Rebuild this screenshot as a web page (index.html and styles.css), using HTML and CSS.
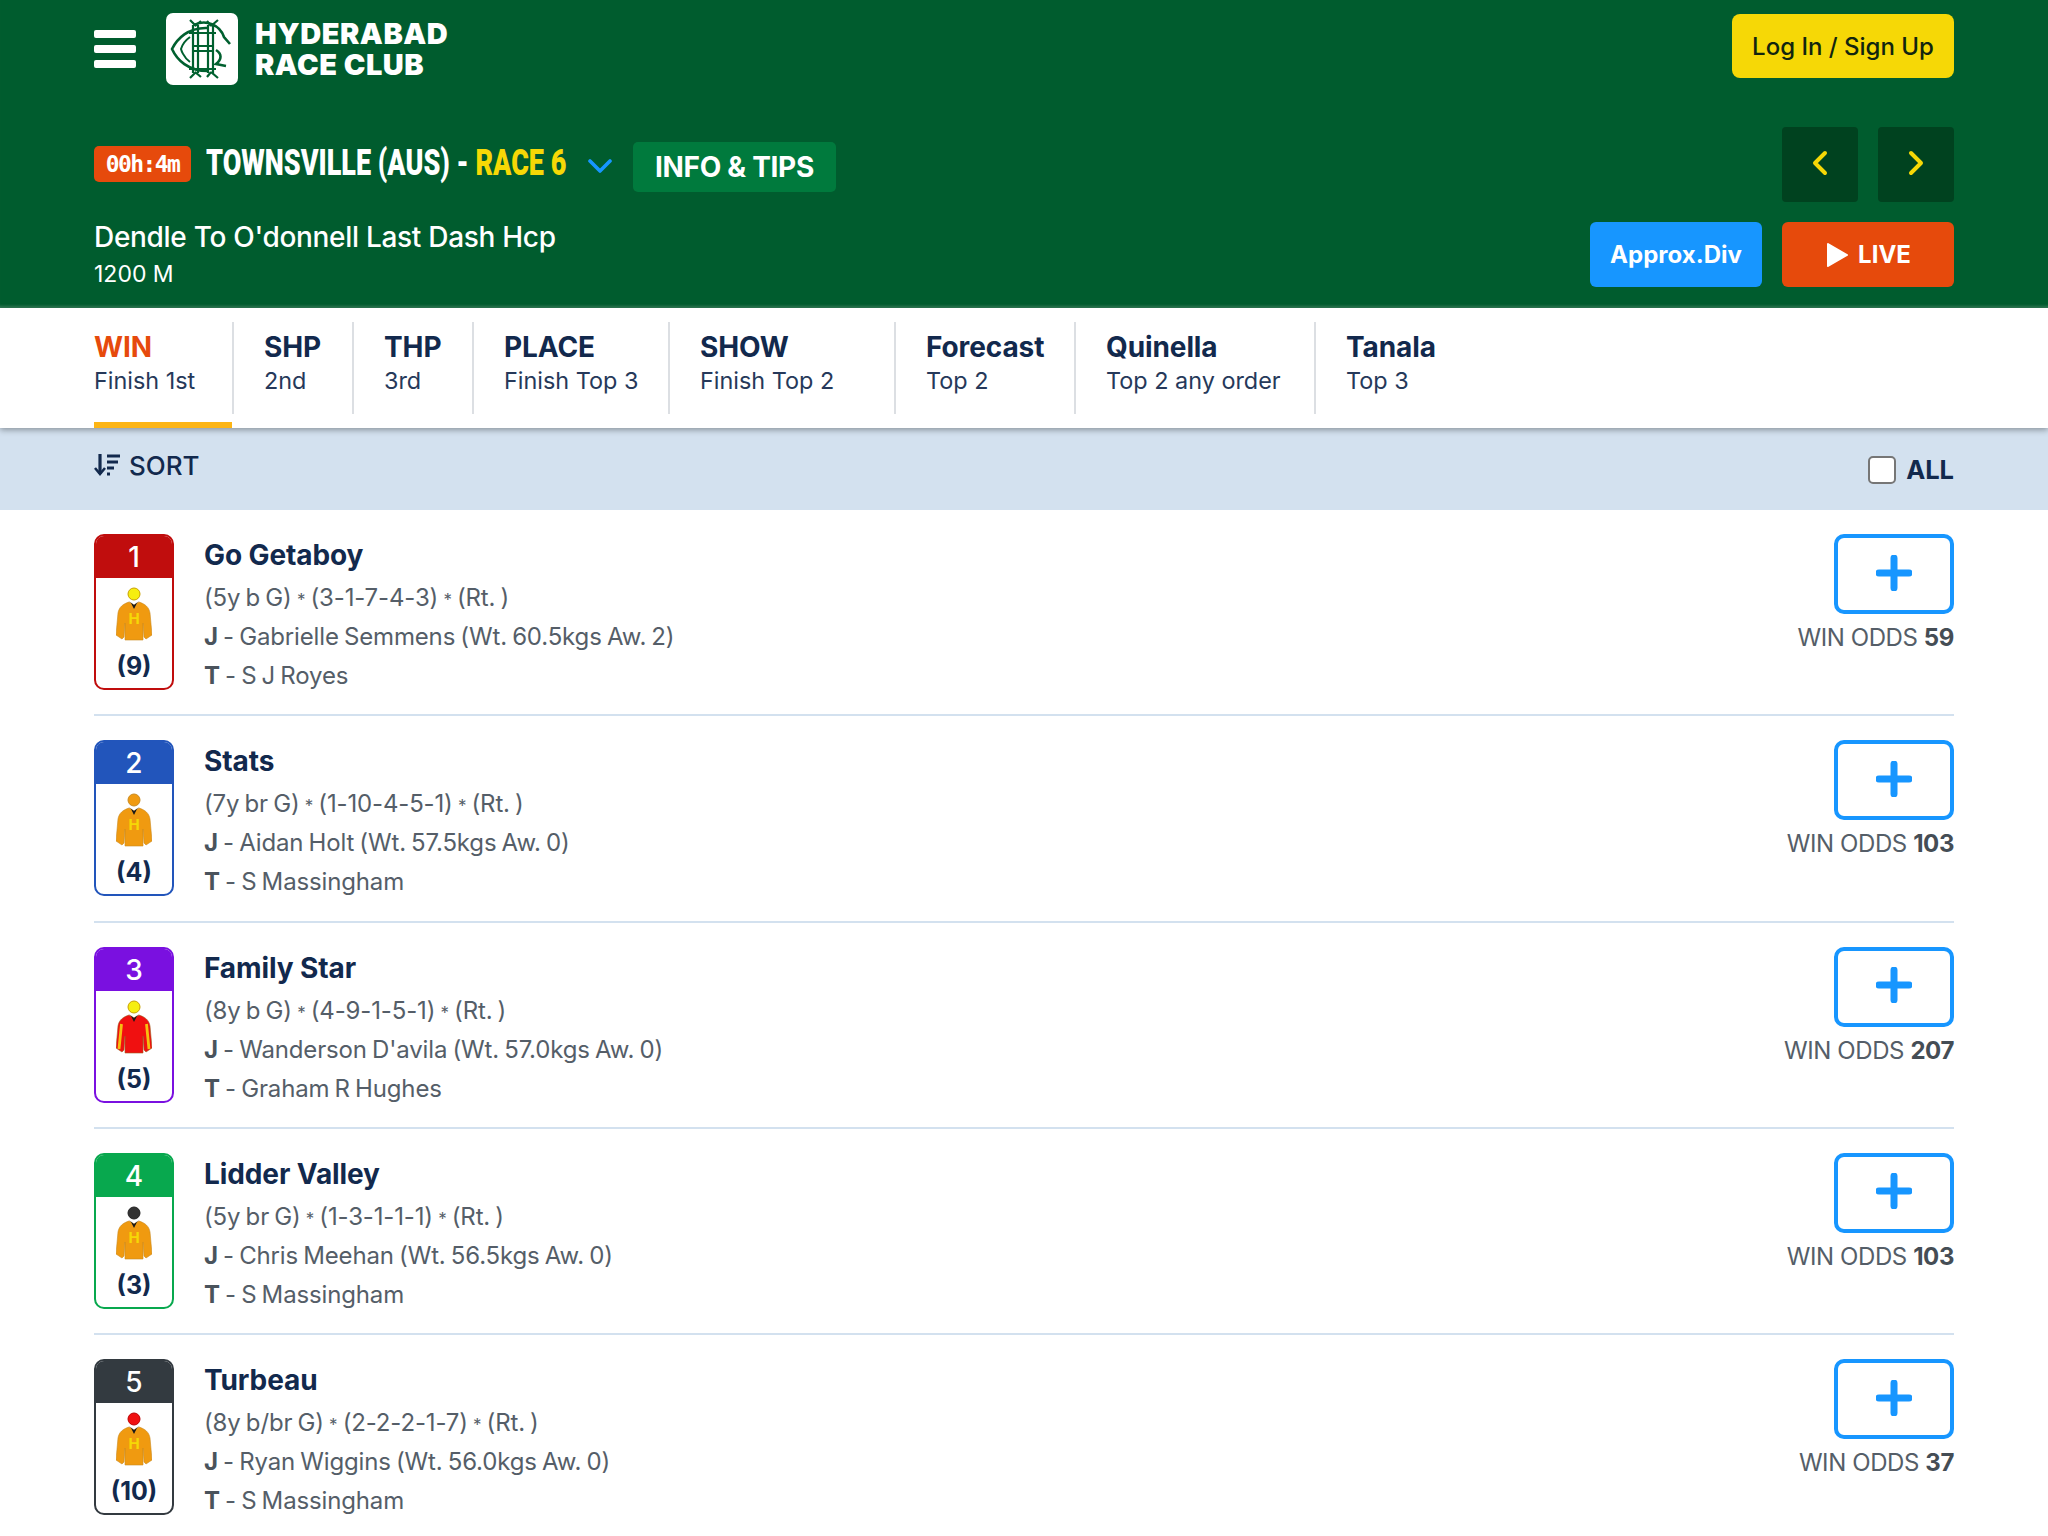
FILE: index.html
```html
<!DOCTYPE html>
<html lang="en">
<head>
<meta charset="utf-8">
<title>Hyderabad Race Club</title>
<link rel="stylesheet" href="styles.css">
</head>
<body>
<svg class="defs" width="0" height="0" aria-hidden="true">
  <symbol id="shirt" viewBox="0 0 36 40">
    <path d="M13 1 L18 4 L23 1 C29 3 33 6 34 12 L36 34 L30 38 L28 36 L27 22 L27 39 L9 39 L9 22 L8 36 L6 38 L0 34 L2 12 C3 6 7 3 13 1 Z" fill="#f09a10" stroke="#c98a20" stroke-width=".6"/>
    <path d="M13 0 L18 4 L23 0 L21 2 L18 8 L15 2 Z" fill="#1a1a1a"/>
  </symbol>
</svg>

<header class="header">
  <div class="topbar">
    <div class="brand">
      <div class="burger"><span></span><span></span><span></span></div>
      <div class="logo">
        <svg viewBox="0 0 72 72" width="72" height="72">
          <g fill="none" stroke="#00602f">
            <path d="M42 15 C22 14 11 26 6 36 C11 47 22 58 42 58" stroke-width="2.6"/>
            <path d="M24 24 C17 29 15 36 15 36 C15 36 17 44 24 49" stroke-width="2"/>
            <path d="M28 12 C40 6 54 12 58 24 L64 31" stroke-width="2.6"/>
            <path d="M50 37 C56 41 56 46 50 51 L60 53" stroke-width="2.6"/>
            <path d="M27 12 V60 M32 12 V60 M42 12 V60 M47 12 V60" stroke-width="2.2"/>
            <path d="M27 33 H47 M27 38 H47" stroke-width="2"/>
            <path d="M23 20 H50 M23 56 H50" stroke-width="2"/>
            <path d="M24 7 L30 13 M35 8 L29 13 M41 8 L45 13 M52 7 L45 13 M24 65 L30 59 M35 64 L29 59 M41 64 L45 59 M52 65 L45 59" stroke-width="2.2"/>
          </g>
        </svg>
      </div>
      <div class="logo-text">HYDERABAD<br>RACE CLUB</div>
    </div>
    <a class="login">Log In / Sign Up</a>
  </div>
  <div class="racebar">
    <div class="race-left">
      <div class="race-title">
        <span class="timer">00h:4m</span>
        <span class="venue-wrap"><span class="venue">TOWNSVILLE (AUS) - <em>RACE 6</em></span></span>
        <svg class="chevron" viewBox="0 0 24 14" width="24" height="14"><path d="M2 2 L12 12 L22 2" fill="none" stroke="#1796ff" stroke-width="3.6" stroke-linecap="round" stroke-linejoin="round"/></svg>
        <a class="info">INFO &amp; TIPS</a>
      </div>
      <div class="race-name">Dendle To O'donnell Last Dash Hcp</div>
      <div class="race-dist">1200 M</div>
    </div>
    <div class="race-right">
      <div class="arrows">
        <a class="arrow"><svg viewBox="0 0 16 26" width="16" height="26"><path d="M13 3 L3 13 L13 23" fill="none" stroke="#f6d806" stroke-width="4" stroke-linecap="round" stroke-linejoin="round"/></svg></a>
        <a class="arrow"><svg viewBox="0 0 16 26" width="16" height="26"><path d="M3 3 L13 13 L3 23" fill="none" stroke="#f6d806" stroke-width="4" stroke-linecap="round" stroke-linejoin="round"/></svg></a>
      </div>
      <div class="actions">
        <a class="btn btn-blue">Approx.Div</a>
        <a class="btn btn-orange"><svg viewBox="0 0 24 26" width="24" height="26"><path d="M3 2 L22 13 L3 24 Z" fill="#fff" stroke="#fff" stroke-width="2" stroke-linejoin="round"/></svg>LIVE</a>
      </div>
    </div>
  </div>
</header>

<nav class="tabs">
  <div class="tab tab-active"><b>WIN</b><span>Finish 1st</span></div>
  <div class="tab"><b>SHP</b><span>2nd</span></div>
  <div class="tab"><b>THP</b><span>3rd</span></div>
  <div class="tab"><b>PLACE</b><span>Finish Top 3</span></div>
  <div class="tab"><b>SHOW</b><span>Finish Top 2</span></div>
  <div class="tab"><b>Forecast</b><span>Top 2</span></div>
  <div class="tab"><b>Quinella</b><span>Top 2 any order</span></div>
  <div class="tab tab-last"><b>Tanala</b><span>Top 3</span></div>
</nav>

<div class="sortbar">
  <div class="sort">
    <svg viewBox="0 0 26 24" width="26" height="24"><g fill="none" stroke="#12294d" stroke-width="3.2"><path d="M6 1 V21"/><path d="M1 15 L6 21 L11 15" stroke-width="2.6"/><path d="M13 3 H26 M13 9 H24 M13 15 H20 M13 21 H16"/></g></svg>
    <span>SORT</span>
  </div>
  <label class="all"><span class="check"></span>ALL</label>
</div>

<main class="list">
  <article class="row c-red">
    <div class="card"><div class="num">1</div>
      <svg class="cap" viewBox="0 0 14 14"><circle cx="7" cy="7" r="6" fill="#f6ee10" stroke="#c9a000"/></svg>
      <svg class="shirt" viewBox="0 0 36 40"><use href="#shirt" width="36" height="40"/><text x="18" y="23" text-anchor="middle" class="shirt-h">H</text></svg>
      <div class="draw">(9)</div></div>
    <div class="info-col">
      <h2>Go Getaboy</h2>
      <p>(5y b G) <i>*</i> (3-1-7-4-3) <i>*</i> (Rt. )</p>
      <p><b>J</b> - Gabrielle Semmens (Wt. 60.5kgs Aw. 2)</p>
      <p><b>T</b> - S J Royes</p>
    </div>
    <div class="odds-col">
      <a class="add"><svg viewBox="0 0 36 36" width="36" height="36"><path d="M18 3 V33 M3 18 H33" stroke="#1796ff" stroke-width="7" stroke-linecap="round"/></svg></a>
      <div class="odds">WIN ODDS <b>59</b></div>
    </div>
  </article>

  <article class="row c-blue">
    <div class="card"><div class="num">2</div>
      <svg class="cap" viewBox="0 0 14 14"><circle cx="7" cy="7" r="6" fill="#f09a10" stroke="#c98a20"/></svg>
      <svg class="shirt" viewBox="0 0 36 40"><use href="#shirt" width="36" height="40"/><text x="18" y="23" text-anchor="middle" class="shirt-h">H</text></svg>
      <div class="draw">(4)</div></div>
    <div class="info-col">
      <h2>Stats</h2>
      <p>(7y br G) <i>*</i> (1-10-4-5-1) <i>*</i> (Rt. )</p>
      <p><b>J</b> - Aidan Holt (Wt. 57.5kgs Aw. 0)</p>
      <p><b>T</b> - S Massingham</p>
    </div>
    <div class="odds-col">
      <a class="add"><svg viewBox="0 0 36 36" width="36" height="36"><path d="M18 3 V33 M3 18 H33" stroke="#1796ff" stroke-width="7" stroke-linecap="round"/></svg></a>
      <div class="odds">WIN ODDS <b>103</b></div>
    </div>
  </article>

  <article class="row c-purple">
    <div class="card"><div class="num">3</div>
      <svg class="cap" viewBox="0 0 14 14"><circle cx="7" cy="7" r="6" fill="#f6ee10" stroke="#c9a000"/></svg>
      <svg class="shirt" viewBox="0 0 36 40">
        <path d="M13 1 L18 4 L23 1 C29 3 33 6 34 12 L36 34 L30 38 L28 36 L27 22 L27 39 L9 39 L9 22 L8 36 L6 38 L0 34 L2 12 C3 6 7 3 13 1 Z" fill="#f01010" stroke="#a06020" stroke-width=".6"/>
        <path d="M5.5 10 L3 35 M30.5 10 L33 35" stroke="#f6c010" stroke-width="2.8" fill="none"/>
        <path d="M13 0 L18 4 L23 0 L21 2 L18 8 L15 2 Z" fill="#1a1a1a"/>
      </svg>
      <div class="draw">(5)</div></div>
    <div class="info-col">
      <h2>Family Star</h2>
      <p>(8y b G) <i>*</i> (4-9-1-5-1) <i>*</i> (Rt. )</p>
      <p><b>J</b> - Wanderson D'avila (Wt. 57.0kgs Aw. 0)</p>
      <p><b>T</b> - Graham R Hughes</p>
    </div>
    <div class="odds-col">
      <a class="add"><svg viewBox="0 0 36 36" width="36" height="36"><path d="M18 3 V33 M3 18 H33" stroke="#1796ff" stroke-width="7" stroke-linecap="round"/></svg></a>
      <div class="odds">WIN ODDS <b>207</b></div>
    </div>
  </article>

  <article class="row c-green">
    <div class="card"><div class="num">4</div>
      <svg class="cap" viewBox="0 0 14 14"><circle cx="7" cy="7" r="6" fill="#333" stroke="#222"/></svg>
      <svg class="shirt" viewBox="0 0 36 40"><use href="#shirt" width="36" height="40"/><text x="18" y="23" text-anchor="middle" class="shirt-h">H</text></svg>
      <div class="draw">(3)</div></div>
    <div class="info-col">
      <h2>Lidder Valley</h2>
      <p>(5y br G) <i>*</i> (1-3-1-1-1) <i>*</i> (Rt. )</p>
      <p><b>J</b> - Chris Meehan (Wt. 56.5kgs Aw. 0)</p>
      <p><b>T</b> - S Massingham</p>
    </div>
    <div class="odds-col">
      <a class="add"><svg viewBox="0 0 36 36" width="36" height="36"><path d="M18 3 V33 M3 18 H33" stroke="#1796ff" stroke-width="7" stroke-linecap="round"/></svg></a>
      <div class="odds">WIN ODDS <b>103</b></div>
    </div>
  </article>

  <article class="row c-dark">
    <div class="card"><div class="num">5</div>
      <svg class="cap" viewBox="0 0 14 14"><circle cx="7" cy="7" r="6" fill="#f01010" stroke="#b00"/></svg>
      <svg class="shirt" viewBox="0 0 36 40"><use href="#shirt" width="36" height="40"/><text x="18" y="23" text-anchor="middle" class="shirt-h">H</text></svg>
      <div class="draw">(10)</div></div>
    <div class="info-col">
      <h2>Turbeau</h2>
      <p>(8y b/br G) <i>*</i> (2-2-2-1-7) <i>*</i> (Rt. )</p>
      <p><b>J</b> - Ryan Wiggins (Wt. 56.0kgs Aw. 0)</p>
      <p><b>T</b> - S Massingham</p>
    </div>
    <div class="odds-col">
      <a class="add"><svg viewBox="0 0 36 36" width="36" height="36"><path d="M18 3 V33 M3 18 H33" stroke="#1796ff" stroke-width="7" stroke-linecap="round"/></svg></a>
      <div class="odds">WIN ODDS <b>37</b></div>
    </div>
  </article>
</main>
</body>
</html>
```
FILE: styles.css
```css
* { box-sizing: border-box; }
html, body { margin: 0; height: 1536px; overflow: hidden; }
body { font-family: Inter, "Liberation Sans", sans-serif; color: #12294d; background: #fff; }
.defs { position: absolute; }
a { display: flex; align-items: center; justify-content: center; }

.header { background: #005c2e; height: 308px; padding: 13px 94px 0; color: #fff; box-shadow: inset 0 -4px 3px -2px rgba(255,255,255,.2); }
.topbar { display: flex; justify-content: space-between; align-items: flex-start; height: 114px; }
.brand { display: flex; align-items: center; height: 72px; }
.burger { display: flex; flex-direction: column; gap: 7px; width: 42px; margin-right: 30px; }
.burger span { display: block; height: 8px; background: #fff; border-radius: 2px; }
.logo { width: 72px; height: 72px; background: #fff; border-radius: 7px; margin-right: 17px; }
.logo svg { display: block; }
.logo-text { font-weight: 900; font-size: 29px; line-height: 31px; letter-spacing: .5px; }
.login { width: 222px; height: 64px; margin-top: 1px; background: #f6d806; color: #11250f; border-radius: 8px; font-size: 24px; font-weight: 500; }

.racebar { display: flex; justify-content: space-between; }
.race-title { display: flex; align-items: center; height: 50px; margin-top: 15px; }
.timer { width: 97px; height: 36px; margin-right: 15px; background: #e64a0c; border-radius: 5px; font-family: "DejaVu Sans Mono", monospace; font-size: 23px; font-weight: 700; letter-spacing: -1.6px; display: flex; align-items: center; justify-content: center; position: relative; top: -3px; }
.venue-wrap { display: block; width: 363px; margin-right: 19px; position: relative; top: -4px; }
.venue { display: inline-block; font-family: Roboto, sans-serif; font-size: 36px; font-weight: 900; white-space: nowrap; transform-origin: left center; transform: scaleX(.75); }
.venue em { font-style: normal; color: #f6d806; }
.chevron { margin-right: 21px; flex: none; position: relative; top: -1px; }
.info { width: 203px; height: 50px; background: #007a3d; border-radius: 5px; font-size: 28px; font-weight: 700; letter-spacing: -.3px; }
.race-name { font-size: 28px; font-weight: 500; line-height: 34px; margin-top: 28px; letter-spacing: -.3px; }
.race-dist { font-size: 23px; line-height: 30px; margin-top: 5px; }

.race-right { display: flex; flex-direction: column; align-items: flex-end; gap: 21px; }
.arrows, .actions { display: flex; gap: 20px; }
.arrow { width: 76px; height: 75px; padding-bottom: 3px; background: #00421f; border-radius: 4px; }
.actions { margin-top: -1px; }
.btn { height: 65px; border-radius: 6px; font-size: 24px; font-weight: 700; }
.btn-blue { width: 172px; background: #1796ff; }
.btn-orange { width: 172px; background: #e64a0c; gap: 9px; }

.tabs { display: grid; grid-template-columns: 140px 120px 120px 196px 226px 180px 240px auto; height: 120px; padding: 14px 94px 0; background: #fff; position: relative; box-shadow: 0 2px 6px rgba(0,0,0,.35); }
.tab { height: 92px; padding: 9px 0 0 30px; border-right: 2px solid #dcdfe3; position: relative; display: flex; flex-direction: column; }
.tab b { font-size: 28px; line-height: 33px; font-weight: 700; letter-spacing: -.1px; }
.tab span { font-size: 23.4px; line-height: 33px; color: #26395a; }
.tab-active { padding-left: 0; }
.tab-active b { color: #e64a0c; }
.tab-active::after { content: ""; position: absolute; left: 0; right: 0; bottom: -14px; height: 6px; background: #fdb515; }
.tab-last { border-right: 0; }

.sortbar { height: 82px; background: #d3e1ef; padding: 0 94px; display: flex; justify-content: space-between; }
.sort { display: flex; align-items: center; gap: 9px; height: 74px; font-size: 26px; font-weight: 500; }
.all { display: flex; align-items: center; gap: 10px; height: 83px; font-size: 25.5px; font-weight: 700; }
.check { width: 28px; height: 28px; background: #fff; border: 2px solid #767676; border-radius: 5px; }

.list { padding: 0 94px; }
.row { display: flex; justify-content: space-between; height: 206.25px; padding-top: 24px; border-bottom: 2px solid #d3e1ef; }
.row:last-child { border-bottom: 0; }
.card { --c: #c00d0d; width: 80px; height: 156px; border: 2px solid var(--c); border-radius: 10px; display: flex; flex-direction: column; align-items: center; flex: none; overflow: hidden; }
.c-blue .card { --c: #2255bb; }
.c-purple .card { --c: #7a10e0; }
.c-green .card { --c: #08a84e; }
.c-dark .card { --c: #333a40; }
.num { width: 100%; height: 42px; background: var(--c); color: #fff; text-align: center; font-size: 28px; font-weight: 500; line-height: 42px; flex: none; }
.cap { width: 14px; height: 14px; margin-top: 9px; flex: none; }
.shirt { width: 36px; height: 40px; flex: none; }
.shirt-h { font: 700 15px Inter, sans-serif; fill: #f6d806; }
.draw { font-size: 25px; font-weight: 700; line-height: 30px; margin-top: 10px; }
.info-col { flex: 1; margin-left: 30px; padding-top: 4px; }
.info-col h2 { margin: 0 0 8px; font-size: 28px; font-weight: 700; line-height: 34px; letter-spacing: -.1px; }
.info-col p { margin: 0 0 3px; font-size: 24px; line-height: 36px; color: #555e68; letter-spacing: -.15px; word-spacing: -1.4px; }
.info-col p i { font-style: normal; font-size: 17px; line-height: 0; }
.info-col p b { font-weight: 700; color: #4a535c; }
.odds-col { display: flex; flex-direction: column; align-items: flex-end; }
.add { width: 120px; height: 80px; padding-bottom: 3px; border: 4px solid #1796ff; border-radius: 10px; }
.odds { font-size: 24px; line-height: 30px; margin-top: 9px; color: #555e68; letter-spacing: -.4px; }
.odds b { font-weight: 700; color: #454d55; }
```
